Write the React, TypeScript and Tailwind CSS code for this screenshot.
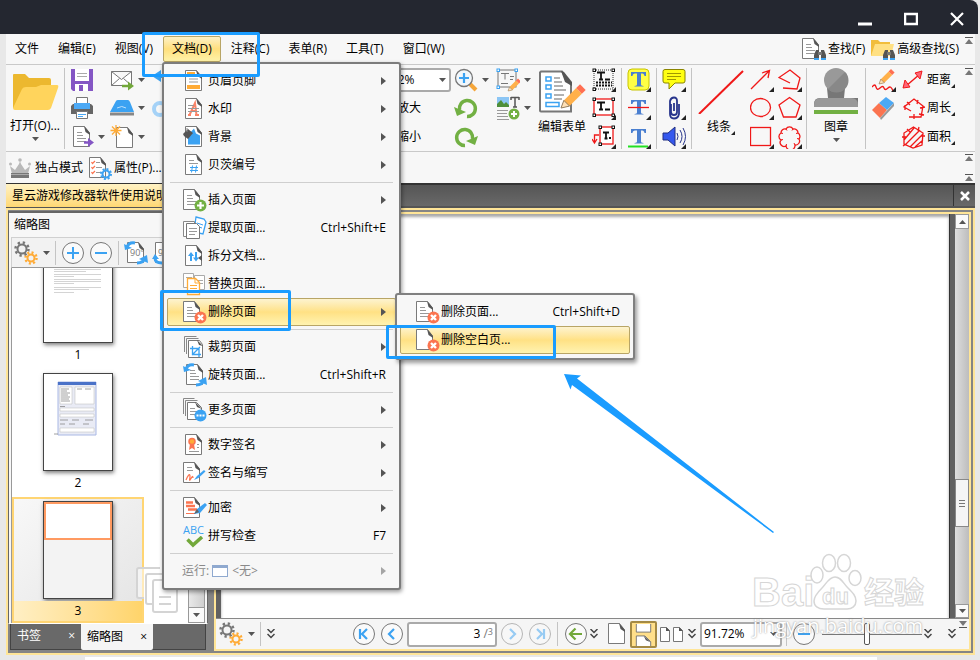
import type { ReactNode } from 'react';

type IconProps = { children?: ReactNode; className?: string };

const Icon = ({ children, className = 'size-6' }: IconProps) => (
  <svg viewBox="0 0 24 24" fill="none" className={`shrink-0 ${className}`} aria-hidden="true">
    {children}
  </svg>
);

// sheet of paper with a folded corner, shared by most icons
const Sheet = ({ x = 0, y = 0, lines = true, stroke = '#7a7a7a' }: { x?: number; y?: number; lines?: boolean; stroke?: string }) => (
  <g transform={`translate(${x} ${y})`}>
    <path d="M.5 1.5h11l5 6.5v13.5H.5z" fill="#fff" stroke={stroke} />
    <path d="M11 1l1.5 6 4.5 3V8z" fill="#555" />
    {lines && <path d="M4 7.5h5M4 10.5h6M4 13.5h9M4 16.5h9" stroke="#999" />}
  </g>
);

const Corner = () => <path d="M24 19v5h-5z" fill="#222" />;

const RedX = () => (
  <g>
    <circle cx="17.5" cy="17.5" r="6" fill="#fb7450" />
    <path d="M15 15l5 5M20 15l-5 5" stroke="#fff" strokeWidth="2.4" />
  </g>
);

const Pencil = ({ t = '' }: { t?: string }) => (
  <g transform={t}>
    <path d="M0 10l1.5-4L8-.5l3 3L4.5 9z" fill="#ffb04a" />
    <path d="M8-.5L10-2.5l3 3-2 2z" fill="#ff6f52" />
    <path d="M0 10l1.5-4 3 3z" fill="#ffe0b5" stroke="#8d7a60" strokeWidth=".5" />
  </g>
);

const SwirlArrows = () => (
  <g>
    <path d="M11 2C6 1 3 4 3 7" stroke="#3ba2f2" strokeWidth="3" />
    <path d="M0 3l1 6 7-2z" fill="#3ba2f2" />
    <path d="M13 22c4.5 0 7-2 7.5-5" stroke="#3ba2f2" strokeWidth="3" />
    <path d="M15 18l8-4 1 8z" fill="#3ba2f2" />
  </g>
);

const DeleteIcon = () => <Icon><Sheet /><RedX /></Icon>;

const menuIcons: Record<string, ReactNode> = {
  header: <Icon><Sheet x={2} lines={false} /><path d="M4 3h8v4H4zM4 16h13v4H4z" fill="#ffab36" /><path d="M6 10h9M6 13h9" stroke="#999" /></Icon>,
  watermark: <Icon><Sheet x={2} lines={false} /><path d="M5 18h3M6.5 18L12 6l1.5 12M8 14h5M12 18h4" stroke="#fb8468" strokeWidth="2" /><path d="M5 8.5h6M5 11.5h11M5 14.5h11" stroke="#999" /></Icon>,
  background: <Icon><Sheet x={2} lines={false} /><path d="M5 19.5V10l6-6.5 2 5 4 2v9z" fill="#3ba2f2" /><path d="M0 9l5-5 5 4-5 6-4-3z" fill="#555" /><path d="M4 3v4" stroke="#888" /></Icon>,
  bates: <Icon><Sheet x={2} lines={false} /><path d="M6 7.5h5M6 10.5h9" stroke="#999" /><path d="M9.5 12.5l-1 7M13.5 12.5l-1 7M7 14.5h8M7 17.5h8" stroke="#3ba2f2" /></Icon>,
  insert: <Icon><Sheet /><circle cx="17.5" cy="17.5" r="6" fill="#72b043" /><path d="M17.5 14v7M14 17.5h7" stroke="#fff" strokeWidth="2.2" /></Icon>,
  extract: <Icon><path d="M13 1l8 2 2 3-3 12-9-2z" fill="#fff" stroke="#3ba2f2" strokeWidth="1.3" /><path d="M14 7l6 2M13 10l6 2" stroke="#3ba2f2" /><path d="M.5 5.5h11v15H.5z" fill="#fff" stroke="#888" /><path d="M3.5 7.5h10l3 3v12h-13z" fill="#fff" stroke="#777" /><path d="M6 12.5h8M6 15.5h8M6 18.5h6" stroke="#999" /></Icon>,
  split: <Icon><Sheet x={2} lines={false} /><path d="M15 14l4-3v6z" fill="#555" /><path d="M8 10v7M13 8v7" stroke="#3ba2f2" strokeWidth="2" /><path d="M5 12l3-4 3 4zM10 13.5l3 4 3-4z" fill="#3ba2f2" /></Icon>,
  replace: <Icon><path d="M.5 1.5h10v14H.5zM11.5 3.5h10v14h-10z" fill="#fff" stroke="#aaa" /><path d="M3 5.5h6M14 8.5h6M14 11.5h6" stroke="#aaa" /><path d="M4.5 6.5h8l4 4v12h-12z" fill="#fff" stroke="#ffab36" strokeWidth="1.3" /><path d="M12 6v5h5zM7 13.5h7M7 16.5h7M7 19.5h7" stroke="#ffab36" /></Icon>,
  remove: <DeleteIcon />,
  crop: <Icon><path d="M1.5 17V1.5h12M3.5 19V3.5h12" stroke="#888" /><path d="M5.5 5.5h11l3 4v13h-14z" fill="#fff" stroke="#777" /><path d="M14 5l2 5 4 1z" fill="#555" /><path d="M9.5 11v8.5H18M7 13.5h9V22M9 20l8-8" stroke="#3ba2f2" strokeWidth="1.3" /></Icon>,
  rotate: <Icon><Sheet x={3} /><SwirlArrows /></Icon>,
  more: <Icon><path d="M.5 16V.5h11M2.5 18V2.5h12" stroke="#888" /><path d="M4.5 4.5h9l5 5v12h-14z" fill="#fff" stroke="#777" /><path d="M12 4l2 5 5 2z" fill="#555" /><path d="M7 10.5h5M7 13.5h8M7 16.5h6" stroke="#999" /><circle cx="17.5" cy="17.5" r="6" fill="#3ba2f2" /><path d="M13.5 17.5h8" stroke="#fff" strokeWidth="2" strokeDasharray="2 1" /></Icon>,
  sign: <Icon><Sheet x={2} lines={false} /><path d="M7 11l-1 6 3-2 3 2-1-6z" fill="#fb7450" /><circle cx="9" cy="8.5" r="3" fill="#ffab36" stroke="#fb7450" strokeWidth="1.5" /><path d="M14 11.5h2M14 14.5h2M6 18.5h10" stroke="#999" /></Icon>,
  initials: <Icon><Sheet lines={false} /><path d="M4 6.5h5M4 9.5h6" stroke="#999" /><path d="M3 19c2-5 4-7 4-4s-1 5 0 4 3-6 3-2" stroke="#fb7450" strokeWidth="1.2" /><path d="M11 19l3-4 7-6 1.5 1.5-7 6.5z" fill="#3ba2f2" /></Icon>,
  encrypt: <Icon><Sheet lines={false} /><path d="M3 6.5h7M3 10h9M5 13.5h9" stroke="#fb7450" strokeWidth="2.5" /><path d="M3 17.5h9" stroke="#fb7450" /><path d="M11 18l3-5 8-6 2 2-7 8z" fill="#3ba2f2" /><path d="M11 18l3-5 2 3z" fill="#666" /></Icon>,
};

type Entry = { icon: string; label: string; keys?: string; sub?: boolean } | null;

const entries: Entry[] = [
  { icon: 'header', label: '页眉页脚', sub: true },
  { icon: 'watermark', label: '水印', sub: true },
  { icon: 'background', label: '背景', sub: true },
  { icon: 'bates', label: '贝茨编号', sub: true },
  null,
  { icon: 'insert', label: '插入页面', sub: true },
  { icon: 'extract', label: '提取页面...', keys: 'Ctrl+Shift+E' },
  { icon: 'split', label: '拆分文档...' },
  { icon: 'replace', label: '替换页面...' },
  { icon: 'remove', label: '删除页面', sub: true },
  null,
  { icon: 'crop', label: '裁剪页面', sub: true },
  { icon: 'rotate', label: '旋转页面...', keys: 'Ctrl+Shift+R' },
  null,
  { icon: 'more', label: '更多页面', sub: true },
  null,
  { icon: 'sign', label: '数字签名', sub: true },
  { icon: 'initials', label: '签名与缩写', sub: true },
  null,
  { icon: 'encrypt', label: '加密', sub: true },
  { icon: 'spell', label: '拼写检查', keys: 'F7' },
  null,
];

const Right = () => (
  <svg viewBox="0 0 5 8" className="h-2 w-[5px]"><path d="M0 0l5 4-5 4z" fill="#555" /></svg>
);

const Down = ({ className = '' }: { className?: string }) => (
  <svg viewBox="0 0 7 4" className={`h-1 w-[7px] shrink-0 ${className}`}><path d="M0 0h7L3.5 4z" fill="#555" /></svg>
);

const MenuRow = ({ icon, label, keys, sub, active }: { icon: ReactNode; label: string; keys?: string; sub?: boolean; active?: boolean }) => (
  <button
    type="button"
    className={`flex h-7 w-full items-center gap-px rounded-[2px] border pr-[9px] pl-[15px] text-left ${
      active ? 'border-[#b8a566] bg-linear-to-b from-[#fdf3cf] via-[#ffe184] to-[#fff3b0]' : 'border-transparent'
    }`}
  >
    {icon}
    <span className="flex-1">{label}</span>
    {keys && <span>{keys}</span>}
    {sub && <Right />}
  </button>
);

const SubMenu = () => (
  <div className="absolute -top-[5px] left-[228px] w-60 rounded-[3px] border-2 border-[#808080] bg-[#f7f7f7] px-[3px] pt-[3px] pb-1 shadow-[2px_3px_4px_rgba(0,0,0,0.4)]">
    <MenuRow icon={<DeleteIcon />} label="删除页面..." keys="Ctrl+Shift+D" />
    <MenuRow icon={<Icon><Sheet lines={false} /><RedX /></Icon>} label="删除空白页..." active />
  </div>
);

const DocumentMenu = () => (
  <div className="absolute top-full -left-px w-[239px] rounded-[3px] border-2 border-[#7c7c7c] bg-[#f7f7f7] p-[3px] shadow-[1px_2px_4px_rgba(0,0,0,0.4)]">
    {entries.map((e, i) =>
      e === null ? (
        <hr key={i} className="mx-[3px] my-[3px] border-t border-[#cfcfcf]" />
      ) : (
        <div key={i} className="relative">
          <MenuRow
            icon={
              e.icon === 'spell' ? (
                <span className="relative h-6 w-6 text-[11px] leading-none text-[#3ba2f2]">
                  ABC
                  <svg viewBox="0 0 18 12" className="absolute bottom-0 left-[3px] h-3 w-[18px]"><path d="M1.5 3.5L7 9l9-8" fill="none" stroke="#72a83a" strokeWidth="3.5" /></svg>
                </span>
              ) : (
                menuIcons[e.icon]
              )
            }
            label={e.label}
            keys={e.keys}
            sub={e.sub}
            active={e.icon === 'remove'}
          />
          {e.icon === 'remove' && <SubMenu />}
        </div>
      ),
    )}
    <button type="button" disabled className="flex h-7 w-full items-center pr-[10px] pl-[15px] text-[#8a8a8a]">
      运行:
      <span className="mr-1 ml-[3px] h-3 w-4 border border-t-[3px] border-[#8fa9cf] bg-white" />
      <span className="flex-1 text-left">&lt;无&gt;</span>
      <span className="opacity-50"><Right /></span>
    </button>
  </div>
);

const Collapse = ({ flip = false }: { flip?: boolean }) => (
  <svg viewBox="0 0 8 7" className={`h-[7px] w-2 ${flip ? 'rotate-180' : ''}`}>
    <path d="M0 .5h8" stroke="#555" />
    <path d="M0 7l4-5 4 5z" fill="#777" />
  </svg>
);

const Binoculars = () => (
  <g>
    <path d="M14 13h3v9h-5v-4zM19 13h3l2 5v4h-5z" fill="#555" />
    <path d="M16 15h4v3h-4z" fill="#777" />
    <path d="M12 22h5M19 22h5" stroke="#3ba2f2" strokeWidth="2" />
  </g>
);

const menus = ['文件', '编辑(E)', '视图(V)', '文档(D)', '注释(C)', '表单(R)', '工具(T)', '窗口(W)'];

const MenuBar = () => (
  <nav className="relative z-20 flex h-[31px] shrink-0 items-center justify-between border-b border-[#c9c9c9]">
    <div className="flex gap-px">
      {menus.map((m) =>
        m === '文档(D)' ? (
          <div key={m} className="relative">
            <button type="button" className="h-[26px] rounded-[2px] border border-[#b8a566] bg-linear-to-b from-[#fdf0c4] via-[#ffdf7c] to-[#fff3a8] px-2">{m}</button>
            <DocumentMenu />
          </div>
        ) : (
          <button key={m} type="button" className="h-[26px] px-[9px]">{m}</button>
        ),
      )}
    </div>
    <div className="flex items-center">
      <button type="button" className="mr-[6px] flex items-center gap-[2px]">
        <Icon><Sheet /><Binoculars /></Icon>
        查找(F)
      </button>
      <button type="button" className="mr-[6px] flex items-center gap-[2px]">
        <Icon><path d="M0 19V3h7l2 2h10v14z" fill="#f1bd3b" /><path d="M0 19l4-12h19l-3 12z" fill="#ffe083" /><Binoculars /></Icon>
        高级查找(S)
      </button>
      <span className="mr-[2px] self-start"><Collapse /></span>
    </div>
  </nav>
);

const Col = ({ children, className = '' }: IconProps) => (
  <div className={`grid shrink-0 grid-rows-3 items-center ${className}`}>{children}</div>
);

const Cell = ({ children, arrow, name }: { children: ReactNode; arrow?: boolean; name?: string }) => (
  <button type="button" aria-label={name} className="flex h-7 items-center gap-1">
    {children}
    {arrow && <Down />}
  </button>
);

const Sep = ({ className = '' }: IconProps) => <div className={`my-[2px] w-px shrink-0 bg-[#c4c4c4] ${className}`} />;

const CornerMark = () => (
  <svg viewBox="0 0 4 4" className="mb-px size-1 shrink-0 self-end"><path d="M4 0v4H0z" fill="#222" /></svg>
);

const BigT = ({ children }: IconProps) => (
  <g>
    {children}
    <path d="M4 4h15v4h-1.5c-.5-2-1-2.5-3.5-2.5V16c0 1.5.5 1.5 2.5 2v.5h-9V18c2-.5 2.5-.5 2.5-2V5.500C6.500 5.500 6 6 5.500 8H4z" fill="#4a7fd0" />
  </g>
);

const Handles = ({ d, stroke = '#111' }: { d: number[][]; stroke?: string }) => (
  <g fill="#fff" stroke={stroke}>
    {d.map(([x, y]) => <rect key={`${x}-${y}`} x={x - 1} y={y - 1} width="2.5" height="2.5" />)}
  </g>
);

const Measure = ({ label, children }: { label: string; children: ReactNode }) => (
  <button type="button" className="flex h-7 items-center gap-px whitespace-nowrap">
    <Icon>{children}</Icon>
    <span className="flex leading-[18px]">{label}<CornerMark /></span>
  </button>
);

const Ribbon = () => (
  <div className="flex h-[87px] shrink-0 border-b border-[#c9c9c9] pt-px">
    <button type="button" className="flex w-[58px] shrink-0 flex-col items-center">
      <svg viewBox="0 0 47 38" className="mt-[7px] h-[38px] w-[47px]">
        <path d="M1 35V2q0-1 1-1h11l4 4h20q2 0 2 2v28z" fill="#ecb82f" />
        <path d="M1 35l9-19q1-2 4-2h10l5-2h16q2 0 1 3l-7 20q-1 2-3 2H3q-2 0-2-2z" fill="#ffd45c" />
      </svg>
      <span className="mt-[6px] leading-[18px] whitespace-nowrap">打开(O)...</span>
      <Down className="mt-[2px]" />
    </button>
    <Sep />
    <Col className="ml-[5px] w-10">
      <Cell name="保存"><Icon><path d="M1 1h22v22H3l-2-2z" fill="#8456c4" /><path d="M5 1h14v12H5z" fill="#fff" /><path d="M7 5.5h10M7 8.5h10" stroke="#aaa" /><path d="M5 16h13v7H5z" fill="#fff" /><path d="M9 17h4v6H9z" fill="#8456c4" /></Icon></Cell>
      <Cell name="打印"><Icon><path d="M6.5 1.5h11v6h-11z" fill="#fff" stroke="#777" /><path d="M3 8h2v5h14V8h2l2 2v8H1v-8z" fill="#666" /><path d="M4 7h16v6H4z" fill="#4ca9f5" /><path d="M6.5 15.5h11v7h-11z" fill="#fff" stroke="#777" /><path d="M8 18.5h8M8 20.5h5" stroke="#4ca9f5" /></Icon></Cell>
      <Cell name="导出" arrow><Icon><Sheet x={3} /><path d="M14 17.5h7" stroke="#8456c4" strokeWidth="2.5" /><path d="M18 13l6 4.5-6 4.5z" fill="#8456c4" /></Icon></Cell>
    </Col>
    <Col className="w-[42px]">
      <Cell name="邮件" arrow><Icon><path d="M1.5 3.5h20v14h-20zM1.5 3.5l10 8 10-8M1.5 17.5l8-7M21.5 17.5l-8-7" fill="#fff" stroke="#777" /><path d="M12 18h7" stroke="#72a83a" strokeWidth="2.5" /><path d="M18 13.5l6 4.5-6 4.5z" fill="#72a83a" /></Icon></Cell>
      <Cell name="扫描" arrow><Icon><path d="M0 16L6 5q.5-1 2-1h10q1 0 2 2l4 10z" fill="#3ba2f2" /><path d="M0 18h24" stroke="#888" strokeWidth="3" /><path d="M7 12q5-3 9 0" stroke="#bfe0fb" /></Icon></Cell>
      <Cell name="新建" arrow><Icon><Sheet x={6} y={1} lines={false} /><path d="M6 0v11M.5 5.5h11M2 1.5l8 8M10 1.5l-8 8" stroke="#ffab36" strokeWidth="1.3" /></Icon></Cell>
    </Col>
    <Col className="w-[217px]">
      <Cell name="撤销"><Icon><path d="M9 2L0 8l9 6v-4q8-1 12 6Q20 6 9 6z" fill="#3ba2f2" /></Icon></Cell>
      <Cell name="重做"><Icon><circle cx="8" cy="13" r="6" stroke="#a5d2f7" strokeWidth="4" /></Icon></Cell>
    </Col>
    <Col className="w-[82px]">
      <span className="relative flex items-center">
        <select aria-label="缩放" className="h-6 w-full appearance-none rounded-[3px] border-2 border-[#aaa] bg-white px-[3px]"><option>91.72%</option></select>
        <Down className="pointer-events-none absolute right-[5px]" />
      </span>
      <button type="button" className="pl-7 text-left">放大</button>
      <button type="button" className="pl-7 text-left">缩小</button>
    </Col>
    <Col className="ml-[3px] w-[42px]">
      <Cell name="缩放工具" arrow><Icon><path d="M16 16l6 6" stroke="#f5a63a" strokeWidth="4" /><circle cx="10" cy="10" r="8.5" fill="#f2f7fb" stroke="#777" strokeWidth="1.3" /><path d="M10 5v10M5 10h10" stroke="#3ba2f2" strokeWidth="2.2" /></Icon></Cell>
      <Cell name="向左旋转"><Icon><path d="M5.5 14a8 8 0 1 1 7.5 6.5" stroke="#72b043" strokeWidth="3.5" /><path d="M0 11l3 9 9-4z" fill="#72b043" /></Icon></Cell>
      <Cell name="向右旋转"><Icon><path d="M18.5 14a8 8 0 1 0-7.5 6.5" stroke="#72b043" strokeWidth="3.5" /><path d="M24 11l-3 9-9-4z" fill="#72b043" /></Icon></Cell>
    </Col>
    <Col className="w-[39px]">
      <Cell name="编辑内容" arrow><Icon><rect x="2" y="2" width="18" height="17" stroke="#777" /><path d="M5 5.5h8M9 5.5v6M14 8.5h4M14 11.5h3M5 15.5h7" stroke="#777" /><Handles d={[[2, 2], [20, 2], [2, 19]]} stroke="#3ba2f2" /><Pencil t="translate(12 13)" /></Icon></Cell>
      <Cell name="添加图片" arrow><Icon><path d="M1 1h12v10H1z" fill="#8cc6f5" /><path d="M1 11V8l4-4 3 4 2-2 3 3v2z" fill="#4e8f3a" /><path d="M15 1.5h8M19 1v10M17 11h4M15 1v3M23 1v3" stroke="#555" strokeWidth="1.5" /><path d="M1 14.5h11M1 17.5h10M1 20.5h11M1 23.5h12" stroke="#999" /><circle cx="18" cy="18" r="5.5" fill="#72b043" /><path d="M18 15v6M15 18h6" stroke="#fff" strokeWidth="2" /></Icon></Cell>
    </Col>
    <button type="button" className="flex w-[54px] shrink-0 flex-col items-center">
      <svg viewBox="0 0 47 44" fill="none" className="mt-1 h-11 w-[47px]">
        <path d="M2 1.5h21l9 13v27H2q-1 0-1-1v-38z" fill="#fff" stroke="#777" strokeWidth="2" />
        <path d="M22 1l4 11 7 4V12L25 2z" fill="#555" />
        <path d="M7 7h5v4H7zM7 15h5v4H7zM7 24h5v4H7zM7 32.5h13v4H7z" stroke="#3ba2f2" strokeWidth="1.5" />
        <path d="M15 8h6M15 12h8M15 16h9M15 20h12M15 25h10M15 29h8" stroke="#999" strokeWidth="1.5" />
        <Pencil t="translate(22 19) scale(1.9)" />
      </svg>
      <span className="mt-1 leading-[18px]">编辑表单</span>
    </button>
    <Col className="ml-[3px] w-[29px]">
      <Cell name="文本框"><Icon><rect x="2" y="2" width="19" height="19" stroke="#333" strokeDasharray="1 1" /><path d="M5 4.5h8M9 4v7M7 11.5h4M13 11.5h5" stroke="#111" strokeWidth="1.8" /><path d="M4 14.5h16M4 17.5h16" stroke="#111" strokeWidth="2" strokeDasharray="2 1" /><Handles d={[[2, 2], [21, 2], [2, 21]]} /><Corner /></Icon></Cell>
      <Cell name="文字"><Icon><rect x="2" y="3" width="19" height="16" fill="#fff" stroke="#f01818" strokeWidth="1.3" /><path d="M5 6.5h8M9 6v7M7 13.5h4M13 13.5h5" stroke="#111" strokeWidth="1.8" /><Handles d={[[2, 3], [21, 3], [2, 19], [21, 19]]} /><Corner /></Icon></Cell>
      <Cell name="标注"><Icon><path d="M7 10H2.5v7M0 14l2.5 4L5 14" stroke="#f01818" strokeWidth="1.3" /><rect x="8" y="2" width="13" height="17" fill="#fff" stroke="#f01818" strokeWidth="1.3" /><path d="M11 7.5h6M14 7v6M12.5 13.5h3M17 13h2" stroke="#111" strokeWidth="1.8" /><Handles d={[[8, 2], [21, 2], [8, 19]]} /><Corner /></Icon></Cell>
    </Col>
    <Sep />
    <Col className="ml-[5px] w-[29px]">
      <Cell name="高亮"><Icon><BigT><rect x="1" y="1" width="21" height="21" rx="4" fill="#ffff45" stroke="#c8c400" /></BigT><Corner /></Icon></Cell>
      <Cell name="删除线"><Icon><BigT /><path d="M1 11.5h21" stroke="#f01818" strokeWidth="1.3" /><Corner /></Icon></Cell>
      <Cell name="下划线"><Icon><BigT /><path d="M1 21.5h20" stroke="#22e022" strokeWidth="2" /><Corner /></Icon></Cell>
    </Col>
    <Sep />
    <Col className="ml-[5px] w-[29px]">
      <Cell name="便笺"><Icon><path d="M3 1.5h18q2 0 2 2V13q0 2-2 2h-8l-6 6v-6H3q-2 0-2-2V3.5q0-2 2-2z" fill="#ffff12" stroke="#8a8400" /><path d="M5 5.5h14M5 8.5h14M5 11.5h9" stroke="#a09a00" /><Corner /></Icon></Cell>
      <Cell name="附件"><Icon><path d="M9 8v8q0 3 3 3t3-3V5q0-3.5-3-3.5T8 5v13q0 4.5 4 4.5t5-4.5V8M12 7v8" stroke="#28358c" strokeWidth="1.8" /><Corner /></Icon></Cell>
      <Cell name="声音"><Icon><path d="M1 8h5l7-6v19l-7-6H1z" fill="#3558ee" stroke="#222f80" /><path d="M15 8q2 3.5 0 7M18 5q4 6.5 0 13M21 3q5 8.5 0 17" stroke="#28358c" /><Corner /></Icon></Cell>
    </Col>
    <Sep />
    <button type="button" className="flex w-[58px] shrink-0 flex-col items-center">
      <svg viewBox="0 0 46 46" className="mt-[2px] h-[46px] w-[46px]"><path d="M1 46L45 3" stroke="#f01818" strokeWidth="2" /></svg>
      <span className="mt-1 flex leading-[18px]">线条<CornerMark /></span>
    </button>
    <Col className="w-7">
      <Cell name="箭头"><Icon><path d="M1 21L19 3M12 5l7.5-2.5L18 10" stroke="#f01818" strokeWidth="1.3" /><Corner /></Icon></Cell>
      <Cell name="椭圆"><Icon><ellipse cx="10.5" cy="11.5" rx="10" ry="9" stroke="#f01818" strokeWidth="1.3" /><Corner /></Icon></Cell>
      <Cell name="矩形"><Icon><rect x=".5" y="2.5" width="20" height="18" stroke="#f01818" strokeWidth="1.3" /><Corner /></Icon></Cell>
    </Col>
    <Col className="w-7">
      <Cell name="折线"><Icon><path d="M12 15L1 9.5 12 2l10 8-3 11-14-1" stroke="#f01818" strokeWidth="1.3" /><Corner /></Icon></Cell>
      <Cell name="多边形"><Icon><path d="M11.5 1.5L22 9l-4 12H5.5L1 9z" stroke="#f01818" strokeWidth="1.3" /><Corner /></Icon></Cell>
      <Cell name="云朵"><Icon><path d="M8 4a4 4 0 0 1 7 0a4 4 0 0 1 5 4a4 4 0 0 1 1 6a4 4 0 0 1-4 6a4 4 0 0 1-9 1a4 4 0 0 1-5-6a4 4 0 0 1 0-7a4 4 0 0 1 5-4z" stroke="#f01818" strokeWidth="1.3" /><path d="M8 4l1 1.5M15 4l-1 1.5M20 8l-2 .5M21 14l-2-.5M17 20l-1-2M8 21l.5-2M3 15l2-.5M3 8l2 .5" stroke="#f01818" /><Corner /></Icon></Cell>
    </Col>
    <Sep />
    <button type="button" className="flex w-[58px] shrink-0 flex-col items-center">
      <svg viewBox="0 0 44 46" className="mt-[2px] h-[46px] w-11">
        <path d="M13 20h18l-1 10h14v7H0v-1q0-6 6-6h8z" fill="#777" />
        <path d="M0 37q0-7 7-7h30q7 0 7 7v2H0z" fill="#999" />
        <circle cx="22" cy="12" r="12" fill="#999" />
        <path d="M14 21A12 12 0 0 0 31 4z" fill="#888" />
        <path d="M0 42h44v4H0z" fill="#72b043" />
      </svg>
      <span className="mt-1 leading-[18px]">图章</span>
      <Down className="mt-[2px]" />
    </button>
    <Sep />
    <Col className="ml-[6px] w-[30px]">
      <Cell name="铅笔"><Icon><Pencil t="translate(7 4) scale(1.2)" /><path d="M0 19q3-4 4 0t4 1 4 0 4 0 5 3" stroke="#f01818" strokeWidth="1.3" /><Corner /></Icon></Cell>
      <Cell name="橡皮擦"><Icon><path d="M0 14l7-7 8 7-7 8z" fill="#fb7450" /><path d="M7 7l7-6 8 6-7 7z" fill="#4ca9f5" /><path d="M8 22l14-15v3L9 24z" fill="#999" /></Icon></Cell>
    </Col>
    <Col className="w-[54px]">
      <Measure label="距离"><path d="M4 18L18 6" stroke="#f01818" strokeWidth="1.5" /><path d="M1 20l2-8 5 7zM20 3l-7 2 5 6z" fill="#f67" stroke="#f01818" /></Measure>
      <Measure label="周长"><path d="M9 15L2 11 12 3l9 7-2 11H7M5 6l3 3M16 4l-1 4M18 12l5-1M17 18l5 1M12 18v5M3 9v5" stroke="#f01818" strokeWidth="1.3" /></Measure>
      <Measure label="面积"><path d="M11.5 2L21 8l-1 12-9 3-9-4V8zM2 15L12 3M3 20L18 5M8 22L21 9M13 22l8-7M5 4l3 3M17 2l-1 4M19 11h4M0 12h4M4 19l-3 2" stroke="#f01818" strokeWidth="1.3" /></Measure>
    </Col>
    <span className="mt-[2px] mr-[2px] ml-auto"><Collapse /></span>
  </div>
);

const Gears = () => (
  <Icon>
    <circle cx="8" cy="8" r="4.5" stroke="#777" strokeWidth="2" />
    <circle cx="8" cy="8" r="6.5" stroke="#777" strokeWidth="2.5" strokeDasharray="2.3 2.8" />
    <circle cx="17" cy="17" r="3.5" stroke="#ffab36" strokeWidth="2" />
    <circle cx="17" cy="17" r="5.5" stroke="#ffab36" strokeWidth="2.5" strokeDasharray="2 2.3" />
  </Icon>
);

const ModeBar = () => (
  <div className="flex h-[31px] shrink-0 items-center">
    <button type="button" className="ml-[2px] flex items-center gap-[3px]">
      <Icon>
        <path d="M2 10l5 4 4-6 1-3 1 3 4 6 5-4-2 8H4z" fill="#b9b9b9" />
        <circle cx="2.5" cy="8" r="1.5" fill="#b9b9b9" />
        <circle cx="12" cy="4" r="1.8" fill="#b9b9b9" />
        <circle cx="21.5" cy="8" r="1.5" fill="#b9b9b9" />
        <path d="M3 17h18v5H3z" fill="#777" />
        <path d="M3 18.5h18" stroke="#aaa" />
      </Icon>
      独占模式
    </button>
    <button type="button" className="ml-[5px] flex items-center gap-[2px]">
      <Icon>
        <Sheet x={1} lines={false} />
        <path d="M8 6.5h4M8 11.5h6M8 16.5h5" stroke="#999" />
        <path d="M3.5 6l1 1.5L7 5M3.5 11l1 1.5L7 10M3.5 16l1 1.5L7 15" stroke="#fb7450" strokeWidth="1.2" />
        <circle cx="18" cy="18" r="3.5" stroke="#3ba2f2" strokeWidth="2" />
        <circle cx="18" cy="18" r="5" stroke="#3ba2f2" strokeWidth="2" strokeDasharray="2 1.9" />
      </Icon>
      属性(P)...
    </button>
    <div className="mr-[2px] ml-auto flex h-full flex-col justify-between py-[2px]"><Collapse /><Collapse /></div>
  </div>
);

const Circle = ({ children, name, faded }: { children: ReactNode; name: string; faded?: boolean }) => (
  <button type="button" aria-label={name} disabled={faded} className={`mx-[2px] ${faded ? 'opacity-50' : ''}`}>
    <Icon><circle cx="12" cy="12" r="10.5" fill="#fafafa" stroke="#777" />{children}</Icon>
  </button>
);

const thumbs = [1, 2, 3];

const Thumbnails = () => (
  <aside className="mt-px flex w-[200px] shrink-0 flex-col">
    <div className="flex min-h-0 flex-1 flex-col border border-t-2 border-[#666] border-b-white bg-[#f7f7f7] px-[2px]">
      <h2 className="flex h-6 items-center pl-[3px]">缩略图</h2>
      <div className="flex h-[31px] shrink-0 items-center overflow-hidden border border-[#d0d0d0] border-b-[#999] bg-[#f2f2f2] pl-[2px]">
        <button type="button" aria-label="选项" className="flex items-center gap-[5px]"><Gears /><Down /></button>
        <Sep className="my-0 ml-[5px] h-6" />
        <span className="ml-[3px] flex">
          <Circle name="放大缩略图"><path d="M12 6v12M6 12h12" stroke="#3ba2f2" strokeWidth="2" /></Circle>
          <Circle name="缩小缩略图"><path d="M6 12h12" stroke="#3ba2f2" strokeWidth="2" /></Circle>
        </span>
        <Sep className="my-0 ml-[3px] h-6" />
        <span className="relative ml-[5px]"><Icon><Sheet x={3} lines={false} /><SwirlArrows /></Icon><span className="absolute top-[6px] left-[6px] text-[9px] leading-3 text-[#777]">90°</span></span>
        <span className="relative ml-1"><Icon><Sheet x={3} lines={false} /><path d="M10 22C5 22 3 20 3 17" stroke="#3ba2f2" strokeWidth="3" /><path d="M0 18h7L3 13z" fill="#3ba2f2" /></Icon><span className="absolute top-[6px] left-[6px] text-[9px] leading-3 text-[#777]">90°</span></span>
      </div>
      <div className="flex min-h-0 flex-1 border-x border-[#999] bg-white">
        <ol className="flex min-w-0 flex-1 flex-col justify-end gap-[2px] overflow-hidden">
          {thumbs.map((n) => (
            <li key={n} className={`flex h-[126px] w-[132px] shrink-0 flex-col items-center border-2 ${n === 3 ? 'border-[#ffd573] bg-linear-to-br from-[#f8f8f8] to-[#e4e4e4]' : 'border-transparent'}`}>
              <div className="mt-[2px] h-[98px] w-[70px] shrink-0 border border-[#444] bg-white shadow-[1px_2px_4px_rgba(0,0,0,0.5)]">
                {n === 1 && (
                  <svg viewBox="0 0 68 96" className="h-24 w-[68px]"><path d="M10 23.5h47M10 25.5h32M10 28.5h47M10 30.5h20M10 33.5h47M10 35.5h47M10 37.5h20M10 41.5h47M10 43.5h35M10 46.5h20" stroke="#d4d4d4" /></svg>
                )}
                {n === 2 && (
                  <svg viewBox="0 0 68 96" className="h-24 w-[68px]">
                    <path d="M14 8h38v53H14z" fill="#e9ebf5" stroke="#a9b8e4" />
                    <path d="M14 8h38v3H14z" fill="#4a72c8" />
                    <path d="M16 13h12v17H16zM31 13h19v17H31zM16 34h34v3H16zM16 40h34v3H16zM16 54h34v4H16z" fill="#fff" stroke="#bbb" strokeWidth=".5" />
                    <path d="M17 15h8M17 17h6M17 19h9M17 21h7M17 23h9M17 25h8M17 27h9M33 15h5M41 15h6M16 32.5h5M16 46h8M28 46h7M41 46h8M16 50h5M25 50h6M39 50h6M10 60h4" stroke="#888" strokeWidth=".8" />
                  </svg>
                )}
                {n === 3 && <div className="h-full bg-[#f3f3f3]"><div className="h-[38px] border-2 border-[#ff9a61] bg-white" /></div>}
              </div>
              <span className={`mt-[2px] h-5 w-full text-center leading-5 ${n === 3 ? 'bg-linear-to-r from-[#ffefc4] to-[#ffd46a]' : ''}`}>{n}</span>
            </li>
          ))}
        </ol>
        <div className="flex w-4 shrink-0 flex-col justify-end border-l border-[#999] bg-linear-to-r from-[#e8e8e8] to-[#cfcfcf]">
          <div className="flex h-4 items-center justify-center border-y border-[#999] bg-[#fafafa]"><Down /></div>
        </div>
      </div>
    </div>
    <div className="mx-[2px] mb-[3px] flex h-[26px] shrink-0 items-start border border-t-0 border-[#444] bg-[#696969]">
      <button type="button" className="flex h-6 w-[70px] items-center justify-between px-[6px] text-white">书签<span>×</span></button>
      <button type="button" className="flex h-[26px] w-[72px] items-center justify-between rounded-b-[2px] bg-[#f5f5f5] px-[6px]">缩略图<span>×</span></button>
    </div>
  </aside>
);

const Chevrons = () => (
  <svg viewBox="0 0 8 10" fill="none" className="h-[10px] w-2 shrink-0"><path d="M.5 0L4 3.5 7.5 0M.5 5L4 8.5 7.5 5" stroke="#444" strokeWidth="1.5" /></svg>
);

const StatusBar = () => (
  <div className="flex h-[31px] shrink-0 items-center border-t border-[#888] bg-[#f5f5f5] pl-[3px]">
    <button type="button" aria-label="选项" className="flex items-center gap-[5px]"><Gears /><Down /></button>
    <Sep className="my-0 mr-[6px] ml-[5px] h-6" />
    <Chevrons />
    <div className="ml-auto flex items-center">
      <Circle name="第一页"><path d="M8 7v10M15 7l-5 5 5 5" stroke="#3ba2f2" strokeWidth="2.2" /></Circle>
      <Circle name="上一页"><path d="M14 7l-5 5 5 5" stroke="#3ba2f2" strokeWidth="2.2" /></Circle>
      <label className="mx-px flex h-[25px] w-[90px] items-center rounded-[3px] border-2 border-[#aaa] bg-white pr-[2px]">
        <input aria-label="页码" defaultValue="3" className="w-[70px] min-w-0 flex-1 bg-transparent text-right outline-none" />
        <span className="ml-[3px] text-[#777]">/</span>
        <span className="mb-1 text-[9px] leading-3 text-[#777]">3</span>
      </label>
      <Circle name="下一页" faded><path d="M10 7l5 5-5 5" stroke="#3ba2f2" strokeWidth="2.2" /></Circle>
      <Circle name="最后一页" faded><path d="M9 7l5 5-5 5M16 7v10" stroke="#3ba2f2" strokeWidth="2.2" /></Circle>
    </div>
    <Sep className="my-0 mr-1 ml-[3px] h-6" />
    <Circle name="后退"><path d="M6 12h12M11.5 6.5L6 12l5.5 5.5" stroke="#72a83a" strokeWidth="2.2" /></Circle>
    <Chevrons />
    <button type="button" aria-label="单页" className="ml-2"><Icon><Sheet x={2} lines={false} /></Icon></button>
    <button type="button" aria-label="连续" className="flex h-[27px] w-[27px] items-center justify-center rounded-[2px] border-2 border-[#a48a45] bg-[#ffdf8a]">
      <Icon className="h-[23px] w-[23px]"><path d="M4.5 1v8.5h15V1M4.5 24V13.5h9l6 6V24" fill="#fff" stroke="#777" /><path d="M12 13l2.5 5 5 2z" fill="#555" /></Icon>
    </button>
    <button type="button" aria-label="双页" className="ml-[3px]"><Icon><path d="M.5 5.5h6l3 3v11h-9zM13.5 5.5h6l3 3v11h-9z" fill="#fff" stroke="#777" /><path d="M6 5v4h4zM19 5v4h4z" fill="#555" /></Icon></button>
    <span className="ml-1"><Chevrons /></span>
    <span className="relative ml-1 flex items-center">
      <select aria-label="缩放比例" className="h-[25px] w-[82px] appearance-none rounded-[3px] border-2 border-[#aaa] bg-white px-[2px]"><option>91.72%</option></select>
      <Down className="pointer-events-none absolute right-[5px]" />
    </span>
    <Sep className="my-0 mr-[3px] ml-1 h-6" />
    <Circle name="缩小"><path d="M6 12h12" stroke="#3ba2f2" strokeWidth="2" /></Circle>
    <input
      type="range"
      aria-label="缩放滑块"
      defaultValue={45}
      className="mr-[2px] ml-1 h-6 w-[100px] appearance-none bg-[linear-gradient(#777,#777)] bg-[length:100%_1px] bg-center bg-no-repeat [&::-webkit-slider-thumb]:h-[22px] [&::-webkit-slider-thumb]:w-[6px] [&::-webkit-slider-thumb]:appearance-none [&::-webkit-slider-thumb]:rounded-[2px] [&::-webkit-slider-thumb]:border [&::-webkit-slider-thumb]:border-[#555] [&::-webkit-slider-thumb]:bg-white"
    />
    <Chevrons />
    <span className="ml-4"><Chevrons /></span>
    <span className="mr-[2px] ml-[3px] self-start pt-[2px]"><Collapse flip /></span>
  </div>
);

const Viewer = () => (
  <section className="mt-[2px] mr-[2px] mb-[2px] ml-[6px] flex min-w-0 flex-1 flex-col border-2 border-[#ffe597]">
    <div className="flex min-h-0 flex-1 bg-[#616161] pl-[5px]">
      <div className="flex-1 border-r border-[#333] bg-white shadow-[inset_0_3px_3px_rgba(0,0,0,0.35)]" />
      <div className="ml-[5px] flex w-[14px] flex-col justify-between bg-linear-to-r from-[#dedede] to-[#bdbdbd]">
        <div className="flex h-[15px] items-center justify-center border border-[#999] bg-[#fafafa]"><Down className="rotate-180" /></div>
        <div className="mt-auto mb-[77px] flex h-12 flex-col items-center justify-center gap-px border border-[#888] bg-[#f5f5f5]">
          <span className="h-px w-[6px] bg-[#777]" />
          <span className="mt-px h-px w-[6px] bg-[#777]" />
          <span className="mt-px h-px w-[6px] bg-[#777]" />
        </div>
        <div className="flex h-[14px] items-center justify-center border border-[#999] bg-[#fafafa]"><Down /></div>
      </div>
    </div>
    <StatusBar />
  </section>
);

const Watermark = () => (
  <div className="pointer-events-none absolute right-[52px] bottom-[22px] z-10 w-[180px] text-white">
    <div className="relative flex items-end justify-between px-1">
      <span className="font-['Liberation_Sans',sans-serif] text-[40px] leading-[44px] font-bold [-webkit-text-stroke:1px_#d6d6d6]">Bai</span>
      <span className="text-[30px] leading-[44px] font-bold [-webkit-text-stroke:1px_#d6d6d6]">经验</span>
      <svg viewBox="0 0 54 58" fill="#fff" stroke="#d6d6d6" strokeWidth="1.5" className="absolute bottom-[3px] left-[61px] h-[58px] w-[54px]">
        <ellipse cx="8" cy="22" rx="6" ry="8" />
        <ellipse cx="20" cy="10" rx="6.5" ry="8.5" />
        <ellipse cx="35" cy="10" rx="6.5" ry="8.5" />
        <ellipse cx="46" cy="25" rx="6" ry="7.5" />
        <path d="M26 24c6 0 8 6 13 11s8 8 8 13-4 8-9 8H15c-6 0-10-3-10-8s4-9 8-13 7-11 13-11z" />
      </svg>
      <span className="absolute bottom-[3px] left-[74px] font-['Liberation_Sans',sans-serif] text-[22px] leading-7 font-bold [-webkit-text-stroke:1px_#d6d6d6]">du</span>
    </div>
    <div className="text-center text-[20px] leading-6 text-white [text-shadow:0_0_2px_#888]">jingyan.baidu.com</div>
  </div>
);

export default function App() {
  return (
    <div className="relative flex h-screen flex-col overflow-hidden bg-[#e8e8e8] font-['Open_Sans','Noto_Sans_CJK_SC',sans-serif] text-xs text-black">
      <header className="mr-[2px] flex h-[34px] shrink-0 items-center justify-end gap-8 rounded-tr-lg bg-[#242730] pt-1 pr-[14px]">
        <button type="button" aria-label="最小化"><svg viewBox="0 0 14 14" className="size-[14px]"><path d="M0 12h14" stroke="#fff" strokeWidth="3" /></svg></button>
        <button type="button" aria-label="最大化"><svg viewBox="0 0 14 14" className="size-[14px]"><path d="M1 2h12v10H1z" fill="none" stroke="#fff" strokeWidth="2.5" /></svg></button>
        <button type="button" aria-label="关闭"><svg viewBox="0 0 14 14" className="size-[14px]"><path d="M1 1l12 12M13 1L1 13" stroke="#fff" strokeWidth="2.2" /></svg></button>
      </header>
      <main className="mr-[5px] ml-[6px] flex min-h-0 flex-1 flex-col bg-[#f7f7f7]">
        <MenuBar />
        <Ribbon />
        <ModeBar />
        <div className="flex h-[25px] shrink-0 items-stretch justify-between border-2 border-x-0 border-t-2 border-t-[#333] border-b-[#555] bg-linear-to-b from-[#555] to-[#696969]">
          <button type="button" className="-my-px w-[260px] bg-linear-to-b from-[#fff2c4] to-[#ffd873] pl-[6px] text-left">星云游戏修改器软件使用说明</button>
          <button type="button" aria-label="关闭文档" className="flex w-[22px] items-center justify-center border-l border-[#333]">
            <svg viewBox="0 0 10 10" className="size-[10px]"><path d="M1 1l8 8M9 1L1 9" stroke="#fff" strokeWidth="2.5" /></svg>
          </button>
        </div>
        <div className="flex min-h-0 flex-1 border-2 border-[#ffe597] bg-[#858585]">
          <Thumbnails />
          <Viewer />
        </div>
      </main>
      <footer className="mr-[103px] ml-[85px] h-[5px] shrink-0 border-t-2 border-[#e8e8e8] bg-white" />

      {/* copy badge over the thumbnails */}
      <svg viewBox="0 0 42 46" fill="#fff" fillOpacity=".5" stroke="#d4d4d4" strokeWidth="2" className="absolute top-[567px] left-[136px] h-[46px] w-[42px]">
        <path d="M24 1H3Q1 1 1 3v26q0 2 2 2h5" />
        <path d="M31 7H12q-2 0-2 2v26q0 2 2 2h5" />
        <path d="M19 13h14l8 8v22q0 2-2 2H19q-2 0-2-2V15q0-2 2-2zM23 30h12M23 37h12" />
      </svg>
      <Watermark />

      {/* tutorial marks */}
      <div className="pointer-events-none absolute top-8 left-[142px] z-30 h-[45px] w-[118px] rounded-[2px] border-3 border-[#1a9cff]" />
      <div className="pointer-events-none absolute top-[290px] left-[160px] z-30 h-[41px] w-[131px] rounded-[2px] border-3 border-[#1a9cff]" />
      <div className="pointer-events-none absolute top-[325px] left-[386px] z-30 h-[34px] w-[170px] rounded-[2px] border-3 border-[#1a9cff]" />
      <svg viewBox="0 0 212 160" className="pointer-events-none absolute top-[373px] left-[563px] z-30 h-40 w-[212px]">
        <path d="M1 1l17 1.5-4 3L211 159l-1 1L9 12l-1.5 4.5z" fill="#1a9cff" />
      </svg>
    </div>
  );
}
